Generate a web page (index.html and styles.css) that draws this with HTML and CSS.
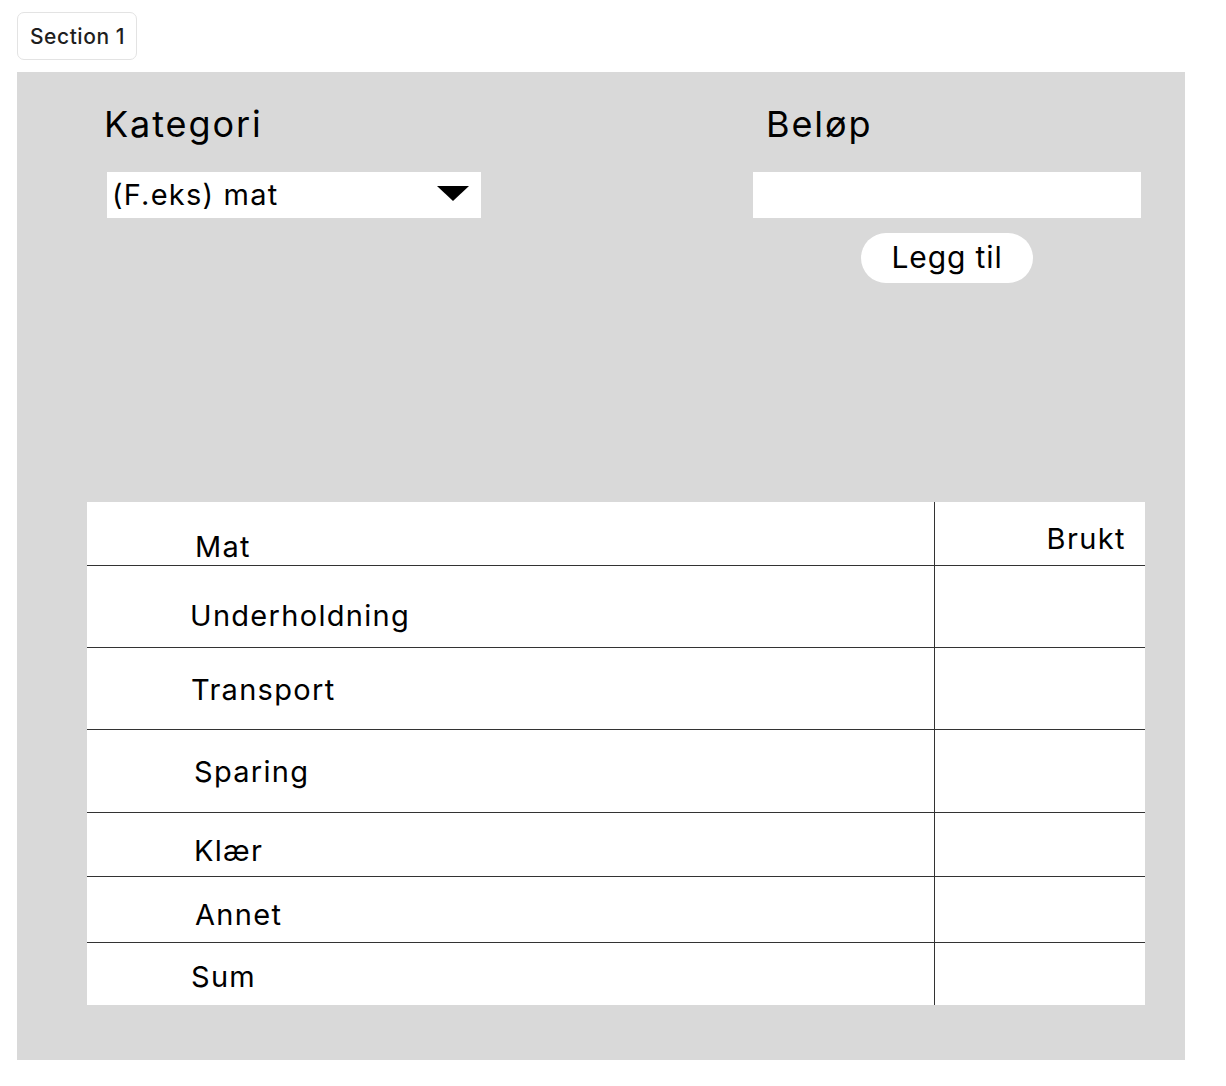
FILE: index.html
```html
<!DOCTYPE html>
<html lang="no">
<head>
<meta charset="utf-8">
<title>Section 1</title>
<link rel="stylesheet" href="styles.css">
</head>
<body>
<div class="section-tag">Section 1</div>
<main class="frame">
  <div class="form">
    <div class="col col-left">
      <h2 class="label label-left">Kategori</h2>
      <div class="select">
        <span class="select-text">(F.eks) mat</span>
        <svg class="caret" width="32" height="15" viewBox="0 0 32 15"><polygon points="0,0 32,0 16,15" fill="#000"/></svg>
      </div>
    </div>
    <div class="col col-right">
      <h2 class="label label-right">Beløp</h2>
      <div class="input"></div>
      <button class="add-btn">Legg til</button>
    </div>
  </div>

  <div class="table">
    <div class="row r-head"><div class="cat">Mat</div><div class="val">Brukt</div></div>
    <div class="row r-under"><div class="cat">Underholdning</div><div class="val"></div></div>
    <div class="row r-trans"><div class="cat">Transport</div><div class="val"></div></div>
    <div class="row r-spar"><div class="cat">Sparing</div><div class="val"></div></div>
    <div class="row r-klaer"><div class="cat">Klær</div><div class="val"></div></div>
    <div class="row r-annet"><div class="cat">Annet</div><div class="val"></div></div>
    <div class="row r-sum"><div class="cat">Sum</div><div class="val"></div></div>
  </div>
</main>
</body>
</html>
```

FILE: styles.css
```css
* { box-sizing: border-box; }

body {
  margin: 0;
  padding: 12px 0 0 17px;
  background: #ffffff;
  font-family: Inter, "Noto Sans", sans-serif;
  color: #000;
}

.section-tag {
  display: inline-flex;
  align-items: center;
  height: 48px;
  padding: 0 11px 0 12px;
  border: 1px solid #e3e3e3;
  border-radius: 7px;
  font-size: 21px;
  font-weight: 500;
  letter-spacing: 0.55px;
  color: #1e1e1e;
  background: #fff;
}

.frame {
  margin-top: 12px;
  width: 1168px;
  height: 988px;
  background: #d9d9d9;
  padding: 35px 0 0 70px;
}

.form {
  display: flex;
  height: 395px;
}

.col { display: flex; flex-direction: column; }

.col-left { width: 374px; margin-left: 20px; }
.col-right { width: 388px; margin-left: 272px; align-items: stretch; }

.label {
  margin: 0;
  font-size: 36px;
  font-weight: 400;
  letter-spacing: 1.9px;
  line-height: 35px;
  height: 35px;
}
.label-left { margin-left: -3px; }
.label-right { margin-left: 13px; }

.select {
  margin-top: 30px;
  height: 46px;
  background: #fff;
  display: flex;
  align-items: center;
  justify-content: space-between;
  padding: 0 12px 0 5px;
}
.select-text {
  font-size: 29px;
  line-height: 29px;
  letter-spacing: 1.2px;
  padding-bottom: 2px;
}
.caret { display: block; margin-top: -3px; }

.input {
  margin-top: 30px;
  height: 46px;
  background: #fff;
}

.add-btn {
  align-self: center;
  margin-top: 15px;
  width: 172px;
  height: 50px;
  border: none;
  border-radius: 25px;
  background: #fff;
  font-family: Inter, "Noto Sans", sans-serif;
  font-size: 30px;
  letter-spacing: 0.9px;
  color: #000;
  padding: 0 0 2px 0;
}

.table {
  width: 1058px;
  background: #fff;
}

.row {
  display: flex;
  border-bottom: 1px solid #333;
}
.row:last-child { border-bottom: none; }

.cat {
  width: 848px;
  border-right: 1px solid #333;
  font-size: 29px;
  line-height: 29px;
  letter-spacing: 1.3px;
  padding-left: 104px;
}
.val {
  flex: 1;
  font-size: 29px;
  line-height: 29px;
  letter-spacing: 1.4px;
  text-align: right;
  padding-right: 19px;
}

.r-head  { height: 64px; }
.r-under { height: 82px; }
.r-trans { height: 82px; }
.r-spar  { height: 83px; }
.r-klaer { height: 64px; }
.r-annet { height: 66px; }
.r-sum   { height: 62px; }

.r-head .cat  { padding-top: 30px; padding-left: 108px; }
.r-head .val  { padding-top: 22px; }
.r-under .cat { padding-top: 35px; padding-left: 103px; }
.r-trans .cat { padding-top: 27px; }
.r-spar .cat  { padding-top: 27px; padding-left: 107px; }
.r-klaer .cat { padding-top: 23px; padding-left: 107px; }
.r-annet .cat { padding-top: 23px; padding-left: 108px; }
.r-sum .cat   { padding-top: 19px; }
```
